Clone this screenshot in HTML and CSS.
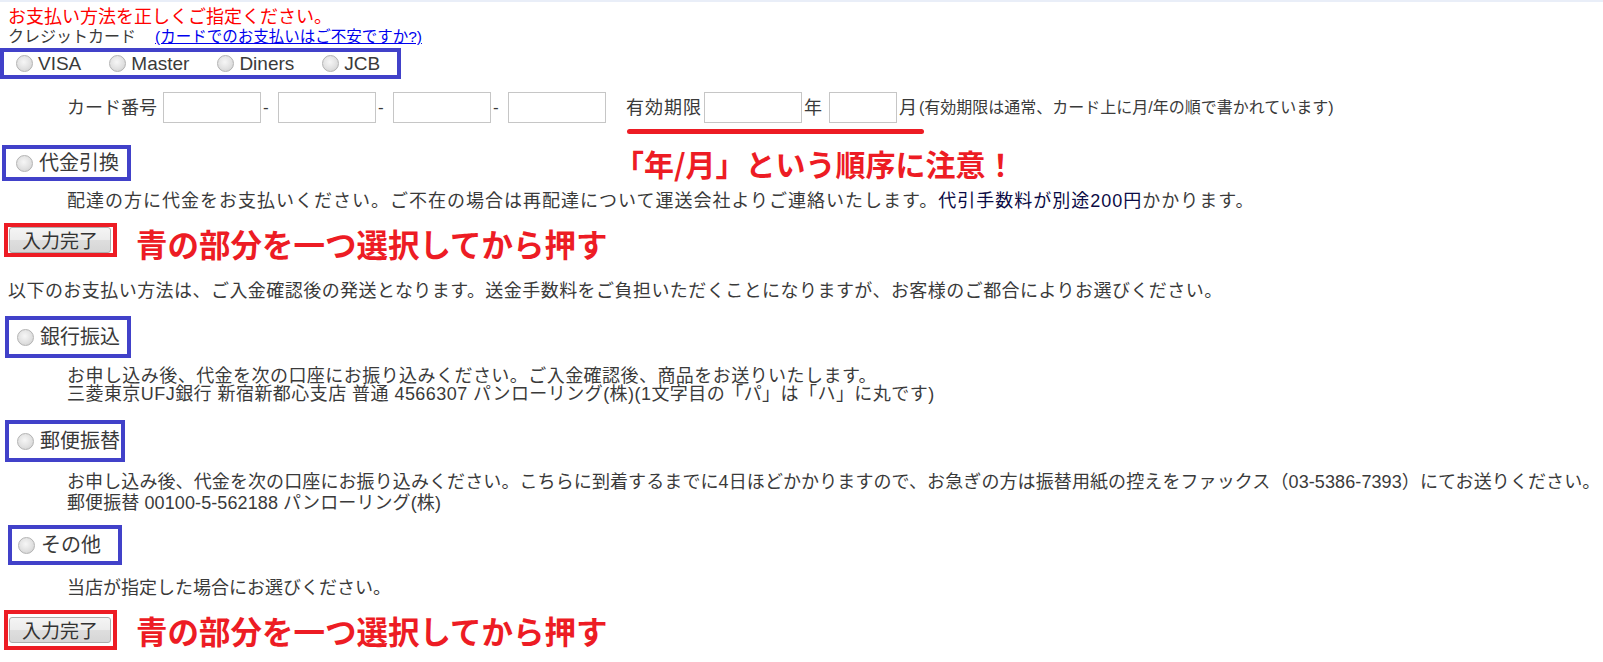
FILE: index.html
```html
<!DOCTYPE html>
<html lang="ja">
<head>
<meta charset="utf-8">
<title>お支払い方法</title>
<link rel="stylesheet" href="styles.css">
</head>
<body>
<div class="topline"></div>
<p class="error">お支払い方法を正しくご指定ください。</p>
<div class="cc-head">クレジットカード<a href="#">(カードでのお支払いはご不安ですか?)</a></div>
<div class="brands">
  <label class="option"><span class="radio"></span>VISA</label>
  <label class="option"><span class="radio"></span>Master</label>
  <label class="option"><span class="radio"></span>Diners</label>
  <label class="option"><span class="radio"></span>JCB</label>
</div>
<div class="card-row">
  <span class="card-label">カード番号</span>
  <input class="field" type="text"><span class="dash">-</span>
  <input class="field" type="text"><span class="dash">-</span>
  <input class="field" type="text"><span class="dash">-</span>
  <input class="field" type="text">
  <span class="expiry-label">有効期限</span>
  <input class="field field-year" type="text">
  <span class="unit">年</span>
  <input class="field field-month" type="text">
  <span class="unit">月</span>
  <span class="note">(有効期限は通常、カード上に月/年の順で書かれています)</span>
  <span class="underline"></span>
  <span class="callout callout-expiry">「年/月」という順序に注意！</span>
</div>

<div class="pick pick-cod"><span class="radio"></span><span class="pick-label">代金引換</span></div>
<p class="desc desc-cod">配達の方に代金をお支払いください。ご不在の場合は再配達について運送会社よりご連絡いたします。<span class="fee">代引手数料が別途200円</span>かかります。</p>

<div class="submit-row submit-first">
  <div class="submit-frame submit-frame-short"><button class="submit-btn" type="button">入力完了</button></div>
  <span class="callout callout-offset">青の部分を一つ選択してから押す</span>
</div>

<p class="lead">以下のお支払い方法は、ご入金確認後の発送となります。送金手数料をご負担いただくことになりますが、お客様のご都合によりお選びください。</p>

<div class="pick pick-bank"><span class="radio"></span><span class="pick-label">銀行振込</span></div>
<p class="desc desc-bank">お申し込み後、代金を次の口座にお振り込みください。ご入金確認後、商品をお送りいたします。<br>三菱東京UFJ銀行 新宿新都心支店 普通 4566307 パンローリング(株)(1文字目の「パ」は「ハ」に丸です)</p>

<div class="pick pick-postal"><span class="radio"></span><span class="pick-label">郵便振替</span></div>
<p class="desc desc-postal">お申し込み後、代金を次の口座にお振り込みください。こちらに到着するまでに4日ほどかかりますので、お急ぎの方は振替用紙の控えをファックス（03-5386-7393）にてお送りください。<br>郵便振替 00100-5-562188 パンローリング(株)</p>

<div class="pick pick-other"><span class="radio"></span><span class="pick-label">その他</span></div>
<p class="desc desc-other">当店が指定した場合にお選びください。</p>

<div class="submit-row submit-last">
  <div class="submit-frame submit-frame-tall"><button class="submit-btn" type="button">入力完了</button></div>
  <span class="callout">青の部分を一つ選択してから押す</span>
</div>
</body>
</html>
```
FILE: styles.css
```css
* { box-sizing: border-box; }
html, body { margin: 0; padding: 0; background: #fff; }
body {
  font-family: "Liberation Sans", "Noto Sans CJK JP", sans-serif;
  color: #3a3a3a;
  font-size: 18px;
  line-height: 20px;
}
p { margin: 0; }

.topline { height: 2px; background: #e9eef8; }

.error {
  margin: 5px 0 0 8px;
  color: #ff0000;
  font-size: 18px;
  line-height: 20px;
}

.cc-head {
  display: flex;
  margin-left: 8px;
  font-size: 16px;
  line-height: 20px;
}
.cc-head a { margin-left: 19px; color: #0000ee; text-decoration: underline; font-size: 15.5px; }

.brands {
  display: flex;
  align-items: center;
  width: 401px;
  height: 31px;
  margin-top: 1px;
  border: 4px solid #4141c9;
  padding-left: 12px;
  gap: 28px;
}
.option {
  display: flex;
  align-items: center;
  gap: 5px;
  font-size: 19px;
  line-height: 23px;
  color: #3a3a3a;
}

.radio {
  flex: none;
  display: inline-block;
  width: 17px;
  height: 17px;
  border-radius: 50%;
  border: 1px solid #b3b3b3;
  background: radial-gradient(circle at 45% 40%, #f6f6f6 0%, #e1e1e1 55%, #cbcbcb 100%);
}

.card-row {
  position: relative;
  display: flex;
  align-items: center;
  height: 31px;
  margin-top: 13px;
  padding-left: 67px;
  white-space: nowrap;
}
.card-label { margin-right: 6px; }
.field {
  flex: none;
  width: 98px;
  height: 31px;
  margin: 0;
  padding: 0 4px;
  border: 1px solid #c6c6c6;
  background: #fff;
  font-size: 16px;
}
.field-month { width: 68px; margin-left: 7px; }
.field-year { margin-left: 2px; }
.dash { width: 17px; padding-left: 2px; font-size: 17px; }
.expiry-label { margin-left: 20px; letter-spacing: 1px; }
.unit { margin-left: 2px; }
.note { margin-left: 2px; font-size: 16px; }

.underline {
  position: absolute;
  left: 627px;
  top: 37px;
  width: 297px;
  height: 5px;
  border-radius: 3px;
  background: #ed1c24;
}
.callout {
  color: #ed1c24;
  font-family: "Noto Sans CJK JP", sans-serif;
  font-weight: 700;
  font-size: 31.5px;
  line-height: 36px;
  white-space: nowrap;
}
.callout-expiry {
  position: absolute;
  left: 614px;
  top: 55px;
  font-size: 30px;
  line-height: 32px;
}
.callout-offset { margin-top: 2px; }

.pick {
  display: flex;
  align-items: center;
  width: fit-content;
  border: 4px solid #4141c9;
  gap: 6px;
}
.pick-label { font-size: 20px; line-height: 26px; }
.pick-cod { margin: 22px 0 0 2px; height: 36px; padding: 0 8px 0 10px; }
.pick-bank { margin: 15px 0 0 5px; height: 42px; padding: 0 7px 0 8px; }
.pick-postal { margin: 17px 0 0 5px; height: 42px; padding: 0 1px 0 8px; }
.pick-other { margin: 11px 0 0 8px; height: 40px; padding: 0 17px 0 6px; }

.desc { padding-left: 67px; line-height: 20px; white-space: nowrap; }
.desc-cod { margin-top: 10px; letter-spacing: 1px; }
.desc-bank { margin-top: 9px; line-height: 18px; letter-spacing: 0.45px; }
.desc-postal { margin-top: 10px; line-height: 21px; letter-spacing: 0.1px; }
.desc-other { margin-top: 13px; }
.fee { color: #0b0b45; }

.lead { margin: 20px 0 0 8px; line-height: 20px; white-space: nowrap; letter-spacing: 0.45px; }

.submit-row {
  display: flex;
  align-items: center;
  gap: 19px;
  margin-left: 4px;
}
.submit-first { margin-top: 12px; align-items: flex-start; }
.submit-last { margin-top: 12px; }
.submit-frame {
  display: flex;
  align-items: center;
  width: 113px;
  height: 38px;
  padding-left: 1px;
  border: 4px solid #ed1c24;
}
.submit-frame-short { height: 34px; }
.submit-frame-tall { height: 40px; }
.submit-btn {
  width: 102px;
  height: 26px;
  margin: 0;
  padding: 0;
  border: 1px solid #acacac;
  border-radius: 3px;
  background: linear-gradient(#f4f4f4 0%, #ececec 50%, #dedede 52%, #d6d6d6 100%);
  color: #333;
  font-family: "Noto Sans CJK JP", sans-serif;
  font-size: 19px;
  line-height: 24px;
}
```
